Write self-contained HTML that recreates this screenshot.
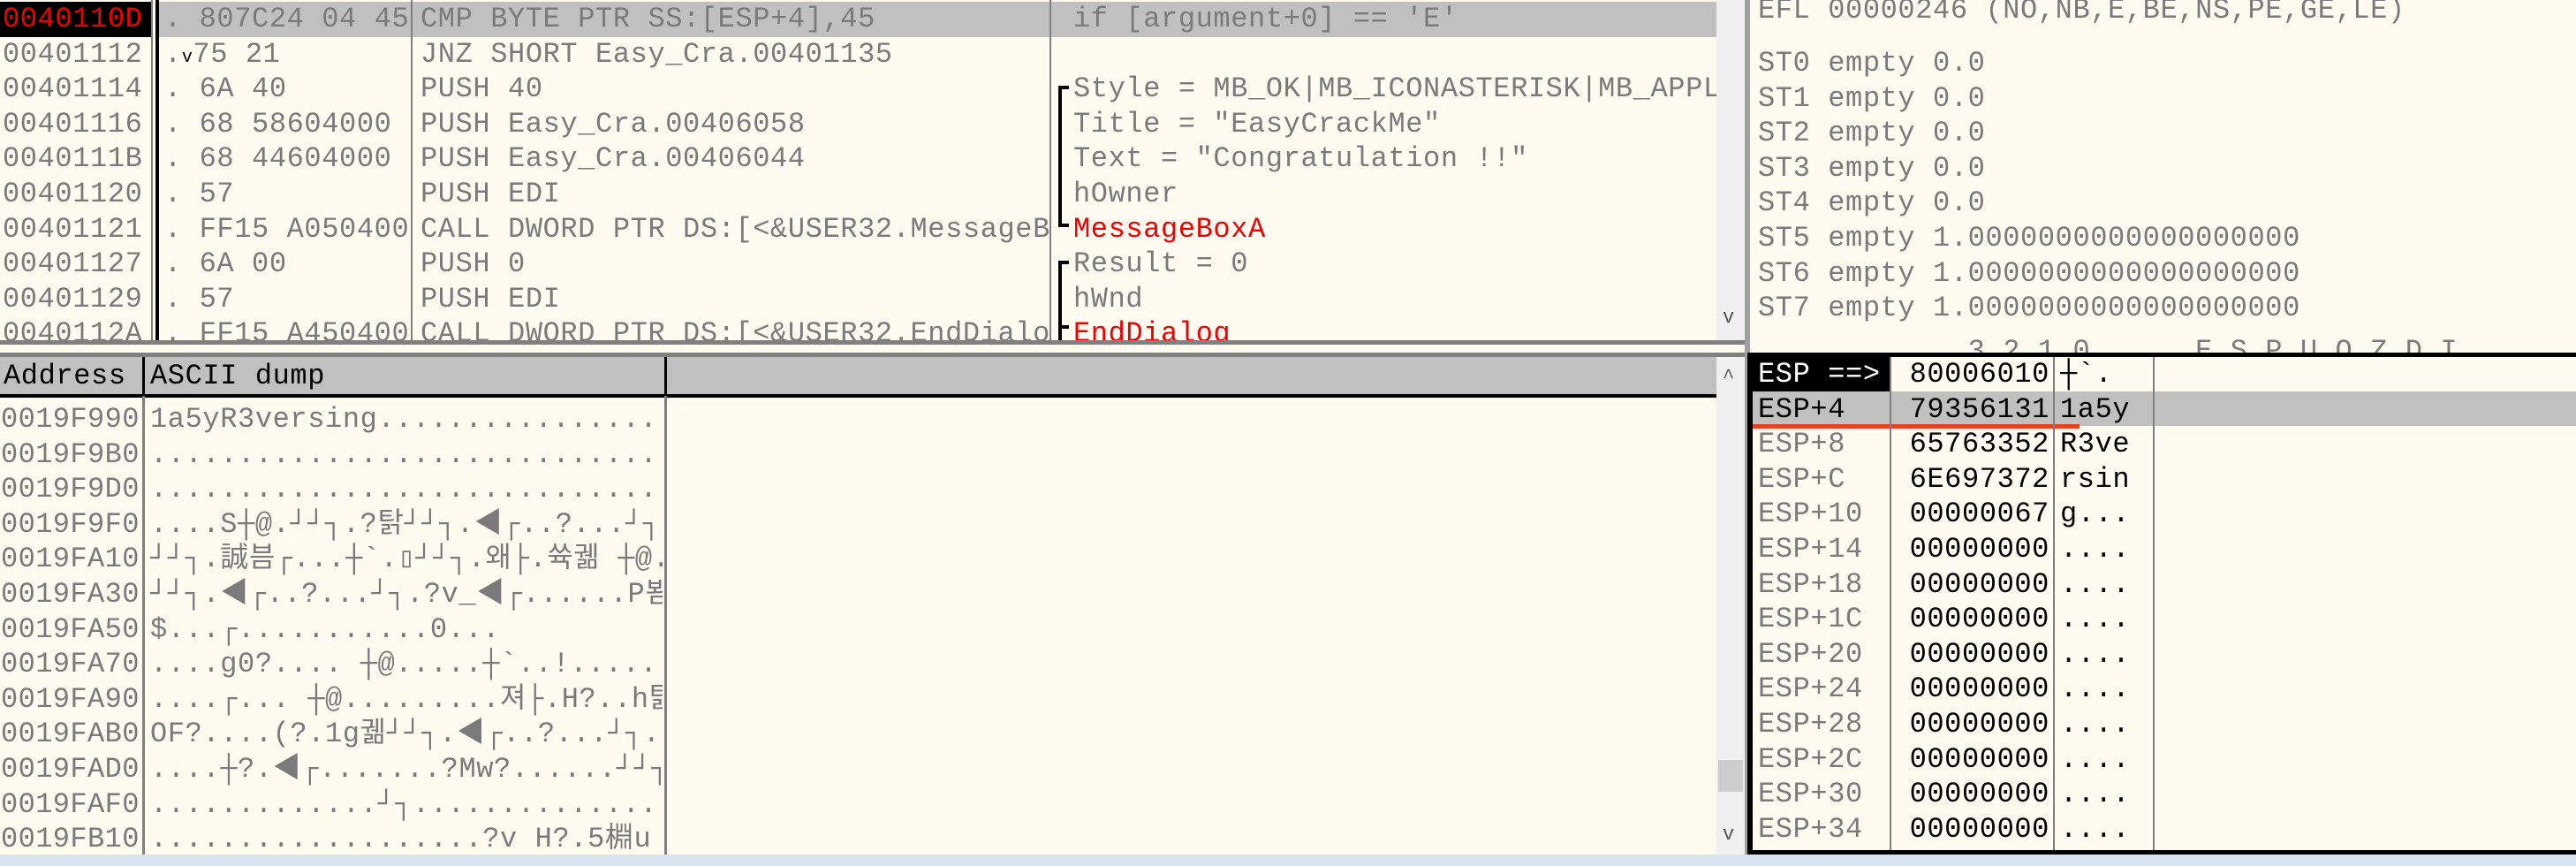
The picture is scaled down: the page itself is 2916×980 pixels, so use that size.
<!DOCTYPE html>
<html><head><meta charset="utf-8"><style>
*{margin:0;padding:0;box-sizing:border-box}
body{width:2916px;height:980px;background:#fffbf0;position:relative;overflow:hidden;font-family:"Liberation Mono","Noto Sans CJK KR",monospace;font-size:32px;color:#7a7a7a;letter-spacing:0.6px}
.a{position:absolute;white-space:pre;overflow:hidden;line-height:39.6px;height:39.6px}
.r{color:#f00000}
.k{color:#000}
.ln{position:absolute;background:#808080}
.bk{position:absolute;background:#000}
</style></head><body>

<!-- Disassembly -->
<div style="position:absolute;left:0;top:0;width:1943px;height:387px;overflow:hidden">
 <div style="position:absolute;left:178px;top:2px;width:1765px;height:40px;background:#c0c0c0"></div>
 <div style="position:absolute;left:0;top:2px;width:171px;height:40px;background:#000"></div>
 <div class="ln" style="left:171px;top:0;width:2px;height:387px"></div>
 <div class="bk" style="left:176px;top:0;width:4px;height:387px"></div>
 <div class="ln" style="left:465px;top:0;width:2px;height:387px"></div>
 <div class="ln" style="left:1188px;top:0;width:2px;height:387px"></div>

 <div class="a" style="left:3px;top:2px;width:168px"><span class="r">0040110D</span></div>
 <div class="a" style="left:3px;top:42px;width:168px">00401112</div>
 <div class="a" style="left:3px;top:81px;width:168px">00401114</div>
 <div class="a" style="left:3px;top:121px;width:168px">00401116</div>
 <div class="a" style="left:3px;top:160px;width:168px">0040111B</div>
 <div class="a" style="left:3px;top:200px;width:168px">00401120</div>
 <div class="a" style="left:3px;top:240px;width:168px">00401121</div>
 <div class="a" style="left:3px;top:279px;width:168px">00401127</div>
 <div class="a" style="left:3px;top:319px;width:168px">00401129</div>
 <div class="a" style="left:3px;top:358px;width:168px">0040112A</div>

 <div class="a" style="left:186px;top:2px;width:278px">. 807C24 04 45</div>
 <div class="a" style="left:186px;top:42px;width:278px">.<span style="font-size:20px;color:#000">v</span>75 21</div>
 <div class="a" style="left:186px;top:81px;width:278px">. 6A 40</div>
 <div class="a" style="left:186px;top:121px;width:278px">. 68 58604000</div>
 <div class="a" style="left:186px;top:160px;width:278px">. 68 44604000</div>
 <div class="a" style="left:186px;top:200px;width:278px">. 57</div>
 <div class="a" style="left:186px;top:240px;width:278px">. FF15 A0504000</div>
 <div class="a" style="left:186px;top:279px;width:278px">. 6A 00</div>
 <div class="a" style="left:186px;top:319px;width:278px">. 57</div>
 <div class="a" style="left:186px;top:358px;width:278px">. FF15 A4504000</div>

 <div class="a" style="left:476px;top:2px;width:712px">CMP BYTE PTR SS:[ESP+4],45</div>
 <div class="a" style="left:476px;top:42px;width:712px">JNZ SHORT Easy_Cra.00401135</div>
 <div class="a" style="left:476px;top:81px;width:712px">PUSH 40</div>
 <div class="a" style="left:476px;top:121px;width:712px">PUSH Easy_Cra.00406058</div>
 <div class="a" style="left:476px;top:160px;width:712px">PUSH Easy_Cra.00406044</div>
 <div class="a" style="left:476px;top:200px;width:712px">PUSH EDI</div>
 <div class="a" style="left:476px;top:240px;width:712px">CALL DWORD PTR DS:[&lt;&amp;USER32.MessageBoxA&gt;]</div>
 <div class="a" style="left:476px;top:279px;width:712px">PUSH 0</div>
 <div class="a" style="left:476px;top:319px;width:712px">PUSH EDI</div>
 <div class="a" style="left:476px;top:358px;width:712px">CALL DWORD PTR DS:[&lt;&amp;USER32.EndDialog&gt;]</div>

 <div class="a" style="left:1215px;top:2px;width:720px">if [argument+0] == 'E'</div>
 <div class="a" style="left:1215px;top:81px;width:728px">Style = MB_OK|MB_ICONASTERISK|MB_APPLMODAL</div>
 <div class="a" style="left:1215px;top:121px;width:720px">Title = "EasyCrackMe"</div>
 <div class="a" style="left:1215px;top:160px;width:720px">Text = "Congratulation !!"</div>
 <div class="a" style="left:1215px;top:200px;width:720px">hOwner</div>
 <div class="a" style="left:1215px;top:240px;width:720px"><span class="r">MessageBoxA</span></div>
 <div class="a" style="left:1215px;top:279px;width:720px">Result = 0</div>
 <div class="a" style="left:1215px;top:319px;width:720px">hWnd</div>
 <div class="a" style="left:1215px;top:358px;width:720px"><span class="r">EndDialog</span></div>

 <div class="bk" style="left:1198px;top:97px;width:4px;height:158px"></div>
 <div class="bk" style="left:1198px;top:97px;width:12px;height:4px"></div>
 <div class="bk" style="left:1198px;top:253px;width:12px;height:4px"></div>
 <div class="bk" style="left:1198px;top:295px;width:4px;height:100px"></div>
 <div class="bk" style="left:1198px;top:295px;width:12px;height:4px"></div>
 <div class="bk" style="left:1198px;top:368px;width:12px;height:4px"></div>
</div>
<div style="position:absolute;left:1943px;top:0;width:32px;height:387px;background:#f0f0f0"></div>
<div class="a" style="left:1950px;top:340px;width:24px;font-size:22px;color:#555">v</div>
<div class="ln" style="left:0;top:385px;width:1976px;height:5px"></div>
<div class="ln" style="left:0;top:399px;width:1976px;height:5px"></div>

<!-- divider -->
<div style="position:absolute;left:1975px;top:0;width:6px;height:980px;background:#a0a0a0"></div>

<!-- Dump -->
<div style="position:absolute;left:0;top:404px;width:1943px;height:44px;background:#c0c0c0"></div>
<div class="bk" style="left:0;top:446px;width:1943px;height:4px"></div>
<div class="ln" style="left:161px;top:404px;width:3px;height:563px"></div>
<div class="bk" style="left:161px;top:404px;width:3px;height:44px"></div>
<div class="ln" style="left:752px;top:404px;width:3px;height:563px"></div>
<div class="bk" style="left:752px;top:404px;width:3px;height:44px"></div>
<div class="a k" style="left:4px;top:406px;width:156px">Address</div>
<div class="a k" style="left:170px;top:406px;width:580px">ASCII dump</div>
<div style="position:absolute;left:0;top:450px;width:752px;height:517px;overflow:hidden">
 <div class="a" style="left:1px;top:5px;width:160px;height:auto;line-height:39.6px;letter-spacing:0.4px">0019F990
0019F9B0
0019F9D0
0019F9F0
0019FA10
0019FA30
0019FA50
0019FA70
0019FA90
0019FAB0
0019FAD0
0019FAF0
0019FB10</div>
 <div class="a" style="left:170px;top:5px;width:580px;height:auto;line-height:39.6px">1a5yR3versing...................
................................
................................
....S┼@.┘┘┐.?탉┘┘┐.◀┌..?...┘┐.
┘┘┐.誠븜┌...┼`.▯┘┘┐.왜├.쓕궮 ┼@.
┘┘┐.◀┌..?...┘┐.?v_◀┌......P뵘.
$...┌...........0...
....g0?.... ┼@.....┼`..!.....
....┌... ┼@.........져├.H?..h탉
OF?....(?.1g궮┘┘┐.◀┌..?...┘┐.
....┼?.◀┌.......?Mw?......┘┘┐.
.............┘┐..................
...................?v H?.5棩u</div>
</div>
<div style="position:absolute;left:1943px;top:404px;width:32px;height:563px;background:#f0f0f0"></div>
<div style="position:absolute;left:1945px;top:860px;width:28px;height:36px;background:#cdcdcd"></div>
<div class="a" style="left:1950px;top:408px;width:24px;font-size:22px;color:#555">^</div>
<div class="a" style="left:1950px;top:925px;width:24px;font-size:22px;color:#555">v</div>

<!-- Registers -->
<div class="a" style="left:1990px;top:-8px;width:920px">EFL 00000246 (NO,NB,E,BE,NS,PE,GE,LE)</div>
<div class="a" style="left:1990px;top:52px;width:920px;height:auto">ST0 empty 0.0
ST1 empty 0.0
ST2 empty 0.0
ST3 empty 0.0
ST4 empty 0.0
ST5 empty 1.0000000000000000000
ST6 empty 1.0000000000000000000
ST7 empty 1.0000000000000000000</div>
<div class="a" style="left:1990px;top:374px;width:920px;height:26px;line-height:48px">            3 2 1 0      E S P U O Z D I</div>

<!-- Stack -->
<div class="bk" style="left:1978px;top:399px;width:938px;height:5px"></div>
<div class="bk" style="left:1978px;top:399px;width:6px;height:568px"></div>
<div class="bk" style="left:1978px;top:962px;width:938px;height:5px"></div>
<div style="position:absolute;left:1984px;top:404px;width:156px;height:39px;background:#000"></div>
<div style="position:absolute;left:1984px;top:443px;width:932px;height:39px;background:#c0c0c0"></div>
<div style="position:absolute;left:1984px;top:480px;width:370px;height:5px;background:#e84020"></div>
<div class="ln" style="left:2139px;top:404px;width:2px;height:558px"></div>
<div class="ln" style="left:2324px;top:404px;width:2px;height:558px"></div>
<div class="ln" style="left:2437px;top:404px;width:2px;height:558px"></div>
<div class="a" style="left:1990px;top:404px;width:148px;height:auto;line-height:39.6px"><span style="color:#fff">ESP ==&gt;</span>
<span class="k">ESP+4</span>
ESP+8
ESP+C
ESP+10
ESP+14
ESP+18
ESP+1C
ESP+20
ESP+24
ESP+28
ESP+2C
ESP+30
ESP+34</div>
<div class="a k" style="left:2150px;top:404px;width:170px;height:auto;line-height:39.6px;text-align:right">80006010
79356131
65763352
6E697372
00000067
00000000
00000000
00000000
00000000
00000000
00000000
00000000
00000000
00000000</div>
<div class="a k" style="left:2332px;top:404px;width:104px;height:auto;line-height:39.6px">┼`.
1a5y
R3ve
rsin
g...
....
....
....
....
....
....
....
....
....</div>

<div style="position:absolute;left:0;top:967px;width:2916px;height:13px;background:#d8e4f0"></div>
</body></html>
